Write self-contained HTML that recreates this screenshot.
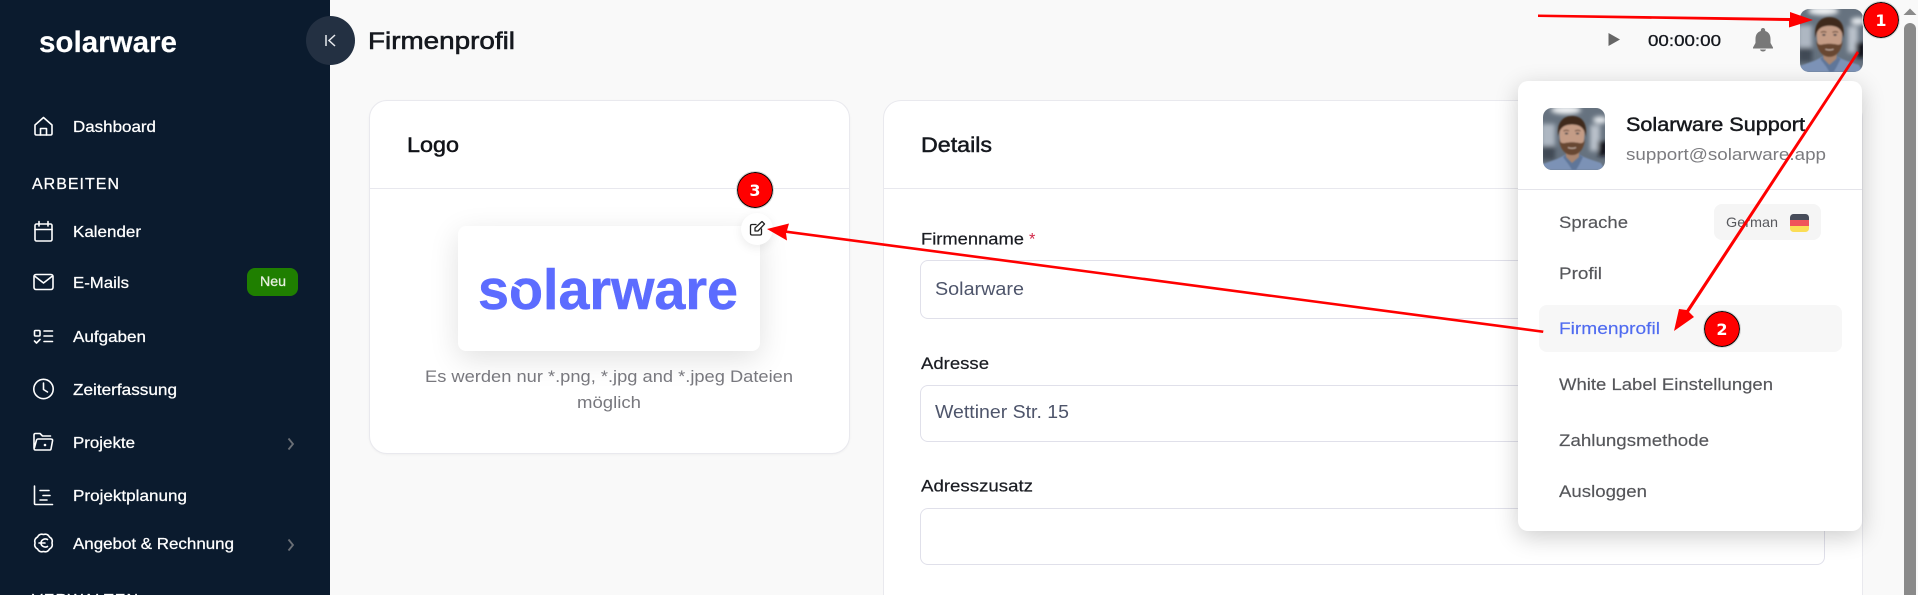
<!DOCTYPE html>
<html lang="de">
<head>
<meta charset="utf-8">
<title>Firmenprofil</title>
<style>
html,body{margin:0;padding:0;width:1918px;height:595px;overflow:hidden;background:#f9f9f9;font-family:"Liberation Sans",sans-serif}
#app{position:relative;width:1918px;height:595px;overflow:hidden;background:#f9f9f9}
.abs,svg.layer{position:absolute}
svg.layer{left:0;top:0}
.sidebar{left:0;top:0;width:330px;height:595px;background:#0b1b2e}
.collapse{left:306px;top:16px;width:49px;height:49px;border-radius:50%;background:#233042}
.card{background:#fff;border:1px solid #e9e9ee;border-radius:18px;box-sizing:border-box;box-shadow:0 1px 2px rgba(0,0,0,.04)}
.hr{height:1px;background:#e8e8ee}
.input{background:#fff;border:1px solid #e0e0ea;border-radius:8px;box-sizing:border-box}
.logobox{left:458px;top:226px;width:302px;height:125px;background:#fff;border-radius:8px;box-shadow:0 8px 30px rgba(0,0,0,.12)}
.editbtn{left:741px;top:213px;width:32px;height:32px;border-radius:50%;background:#fff;box-shadow:0 3px 10px rgba(0,0,0,.08)}
.menu{left:1518px;top:81px;width:344px;height:450px;background:#fff;border-radius:10px;box-shadow:0 6px 24px rgba(0,0,0,.2)}
.pill{left:1714px;top:204px;width:107px;height:36px;background:#f5f5f5;border-radius:8px}
.active{left:1539px;top:305px;width:303px;height:47px;background:#f7f7f7;border-radius:8px}
.thumb{left:1904px;top:23px;width:12px;height:572px;background:#8a8a8a;border-radius:6px 6px 0 0}
</style>
</head>
<body>
<div id="app">
<div class="abs sidebar"></div>
<div class="abs collapse"></div>

<div class="abs card" style="left:369px;top:100px;width:481px;height:354px"></div>
<div class="abs hr" style="left:370px;top:188px;width:479px"></div>
<div class="abs card" style="left:883px;top:100px;width:980px;height:495px;border-bottom:0;border-radius:18px 18px 0 0;box-shadow:none"></div>
<div class="abs hr" style="left:884px;top:188px;width:978px"></div>
<div class="abs logobox"></div>
<div class="abs editbtn"></div>
<div class="abs input" style="left:920px;top:260px;width:905px;height:59px"></div>
<div class="abs input" style="left:920px;top:385px;width:905px;height:57px"></div>
<div class="abs input" style="left:920px;top:508px;width:905px;height:57px"></div>

<div class="abs thumb"></div>

<div class="abs menu"></div>
<div class="abs hr" style="left:1518px;top:189px;width:344px;background:#e4e4ea"></div>
<div class="abs pill"></div>
<div class="abs active"></div>

<svg class="layer" width="1918" height="595" viewBox="0 0 1918 595" xmlns="http://www.w3.org/2000/svg" font-family="'Liberation Sans',sans-serif">
<defs>
  <filter id="b3" x="-30%" y="-30%" width="160%" height="160%"><feGaussianBlur stdDeviation="2.4"/></filter>
  <filter id="b0" x="-30%" y="-30%" width="160%" height="160%"><feGaussianBlur stdDeviation=".7"/></filter>
  <clipPath id="rr"><rect width="62" height="62" rx="9"/></clipPath>
  <g id="face" clip-path="url(#rr)">
    <rect width="62" height="62" fill="#66727f"/>
    <g filter="url(#b3)">
      <ellipse cx="23" cy="2" rx="15" ry="4" fill="#f2f4f6"/>
      <ellipse cx="57" cy="12" rx="7" ry="3.5" fill="#e8ecf0"/>
      <rect x="-2" y="16" width="14" height="24" fill="#aeb7c2"/>
      <rect x="47" y="17" width="10" height="26" fill="#b9c1ca"/>
      <rect x="-2" y="38" width="14" height="14" fill="#3f4955"/>
      <rect x="55" y="33" width="9" height="15" fill="#0c0f14"/>
    </g>
    <path d="M0 62V56L14 51 22 47H36L46 51 58 55 62 62Z" fill="#7b92b6" filter="url(#b0)"/>
    <path d="M20 49 26 57 29 62H33L36 57 40 49 36 46H23Z" fill="#5f7699" filter="url(#b0)"/>
    <path d="M23 38H36V49L29 55 23 49Z" fill="#a98570" filter="url(#b0)"/>
    <g filter="url(#b0)">
      <ellipse cx="29" cy="27" rx="12.500" ry="17.500" fill="#c49c86"/>
      <path d="M15.500 29C13 16 19 8 29 8 39 8 45 15 42.500 29 42 21 38 16.500 29 16.500 20 16.500 16 21 15.500 29Z" fill="#3f2a1f"/>
      <path d="M16 30C16.500 41 22 47 29 47 36 47 41.500 41 42 30 41 35 39 35.500 36 35 32 34 26 34 22 35 19 35.500 17 35 16 30Z" fill="#684733"/>
      <path d="M25 39.500C27 40.600 31 40.600 33 39.500" stroke="#dcc8bc" stroke-width=".9" fill="none"/>
      <ellipse cx="23.500" cy="25.500" rx="1.700" ry=".9" fill="#3e3c44"/>
      <ellipse cx="34.500" cy="25.500" rx="1.700" ry=".9" fill="#3e3c44"/>
      <path d="M20.500 23Q23.500 21.500 26 23M32 23Q35 21.500 37.500 23" stroke="#553a2a" stroke-width="1" fill="none"/>
    </g>
  </g>
</defs>

<!-- sidebar logo -->
<text x="39" y="52" font-size="30" font-weight="700" fill="#fff" stroke="#fff" stroke-width=".15" textLength="138" lengthAdjust="spacingAndGlyphs">solarware</text>

<!-- collapse icon -->
<path d="M326 35V46M335 35l-6 5.500 6 5.500" fill="none" stroke="#e8eaee" stroke-width="1.500"/>

<!-- page title -->
<text x="368" y="49" font-size="24.500" fill="#15181e" stroke="#15181e" stroke-width=".6" textLength="147" lengthAdjust="spacingAndGlyphs">Firmenprofil</text>

<!-- sidebar nav -->
<g fill="#fff" font-size="16" stroke="#fff" stroke-width=".25">
  <text x="73" y="132" textLength="83" lengthAdjust="spacingAndGlyphs">Dashboard</text>
  <text x="32" y="189" textLength="87" lengthAdjust="spacing">ARBEITEN</text>
  <text x="73" y="237" textLength="68" lengthAdjust="spacingAndGlyphs">Kalender</text>
  <text x="73" y="288" textLength="56" lengthAdjust="spacingAndGlyphs">E-Mails</text>
  <text x="73" y="342" textLength="73" lengthAdjust="spacingAndGlyphs">Aufgaben</text>
  <text x="73" y="395" textLength="104" lengthAdjust="spacingAndGlyphs">Zeiterfassung</text>
  <text x="73" y="448" textLength="62" lengthAdjust="spacingAndGlyphs">Projekte</text>
  <text x="73" y="501" textLength="114" lengthAdjust="spacingAndGlyphs">Projektplanung</text>
  <text x="73" y="549" textLength="161" lengthAdjust="spacingAndGlyphs">Angebot &amp; Rechnung</text>
  <text x="32" y="605" textLength="106" lengthAdjust="spacing">VERWALTEN</text>
</g>
<rect x="247" y="268" width="51" height="28" rx="8" fill="#1f7f00"/>
<text x="260" y="286" font-size="14" fill="#e6efdf" stroke="#e6efdf" stroke-width=".3" textLength="26" lengthAdjust="spacingAndGlyphs">Neu</text>

<!-- sidebar icons -->
<g fill="none" stroke="#fff" stroke-width="1.600" stroke-linejoin="round" stroke-linecap="round">
  <path d="M35 125 43.500 117.500 52 125V133.500Q52 135 50.500 135H36.500Q35 135 35 133.500Z"/>
  <path d="M40.500 135V128.500H46.500V135"/>
  <rect x="35" y="224" width="17" height="17" rx="1.500"/>
  <path d="M35 229.500H52M39 221.500V226M48 221.500V226"/>
  <rect x="34" y="274.500" width="19" height="15" rx="2"/>
  <path d="M34.500 276 43.500 283 52.500 276"/>
  <rect x="34.500" y="330.500" width="5.500" height="5.500" rx="1"/>
  <path d="M34.500 341 36.500 343 40 339.500M44 331H52.500M44 336H52.500M44 341.500H52.500"/>
  <circle cx="43.500" cy="389" r="9.700"/>
  <path d="M43.500 383V389.500L47.500 392"/>
  <path d="M34 448V435C34 434 34.500 433.500 35.500 433.500H40L42.500 436H50.500M34.500 447.500 36.500 440Q37 439 38 439H51Q53 439 52.500 441L51 449Q50.800 450 50 450H35.500Q34 450 34 448Z"/>
  <path d="M34.500 486V503.500Q34.500 504.500 35.500 504.500H52.500M40 490.500H49M43 495.500H50M40 500H47"/>
  <path d="M52 543Q53.200 547 49.500 549 47.500 552.700 43.500 551.500 39.500 552.700 37.500 549 33.800 547 35 543 33.800 539 37.500 537 39.500 533.300 43.500 534.500 47.500 533.300 49.500 537 53.200 539 52 543Z"/>
  <path d="M47.500 539.500C44.500 538 41 540 41 543S44.500 548 47.500 546.500M39 543H45"/>
</g>
<circle cx="45" cy="445" r="1.300" fill="#fff"/>
<path d="M288.500 438.500 293 444 288.500 449.500M288.500 539.500 293 545 288.500 550.500" fill="none" stroke="#6a6f76" stroke-width="1.800"/>

<!-- Logo card -->
<text x="407" y="152" font-size="21.500" fill="#111318" stroke="#111318" stroke-width=".5" textLength="52" lengthAdjust="spacingAndGlyphs">Logo</text>
<text x="478" y="309" font-size="57" font-weight="700" fill="#5c6cff" stroke="#5c6cff" stroke-width=".5" textLength="260" lengthAdjust="spacingAndGlyphs">solarware</text>
<path d="M507 284Q518 284 524 293" fill="none" stroke="#fff" stroke-width="2.500"/>
<text x="425" y="382" font-size="16.500" fill="#78787e" textLength="368" lengthAdjust="spacingAndGlyphs">Es werden nur *.png, *.jpg and *.jpeg Dateien</text>
<text x="577" y="408" font-size="16.500" fill="#78787e" textLength="64" lengthAdjust="spacingAndGlyphs">möglich</text>
<g fill="none" stroke="#222" stroke-width="1.300" stroke-linejoin="round" stroke-linecap="round">
  <path d="M756 224.500H752Q750.500 224.500 750.500 226V233.500Q750.500 235 752 235H760Q761.500 235 761.500 233.500V229"/>
  <path d="M755 231V228L762 221.500 764.500 224 758 231Z"/>
</g>

<!-- Details -->
<text x="921" y="152" font-size="21.500" fill="#15181e" stroke="#15181e" stroke-width=".5" textLength="71" lengthAdjust="spacingAndGlyphs">Details</text>
<text x="921" y="244.500" font-size="16.500" fill="#1a1c22" stroke="#1a1c22" stroke-width=".2" textLength="103" lengthAdjust="spacingAndGlyphs">Firmenname</text>
<text x="1029" y="244.500" font-size="16.500" fill="#d22a4a">*</text>
<text x="935" y="295" font-size="18" fill="#4e556b" textLength="89" lengthAdjust="spacingAndGlyphs">Solarware</text>
<text x="921" y="369" font-size="16.500" fill="#1a1c22" stroke="#1a1c22" stroke-width=".2" textLength="68" lengthAdjust="spacingAndGlyphs">Adresse</text>
<text x="935" y="418" font-size="18" fill="#4e556b" textLength="134" lengthAdjust="spacingAndGlyphs">Wettiner Str. 15</text>
<text x="921" y="491.500" font-size="16.500" fill="#1a1c22" stroke="#1a1c22" stroke-width=".2" textLength="112" lengthAdjust="spacingAndGlyphs">Adresszusatz</text>

<!-- top bar -->
<path d="M1608.500 33V46L1620 39.500Z" fill="#666"/>
<text x="1648" y="46" font-size="16" fill="#15181e" stroke="#15181e" stroke-width=".3" textLength="73" lengthAdjust="spacingAndGlyphs">00:00:00</text>
<path d="M1763 28a2.200 2.200 0 0 1 2.200 2.200v.8c3.600 1.100 5.300 4 5.300 8v4l2.500 4.500v1h-20v-1l2.500-4.500v-4c0-4 1.700-6.900 5.300-8v-.8a2.200 2.200 0 0 1 2.200-2.200z" fill="#787878"/>
<path d="M1760 49.500h6c-.3 1.400-1.500 2-3 2s-2.700-.6-3-2Z" fill="#787878"/>
<use href="#face" transform="translate(1800 9) scale(1.016)"/>

<!-- menu -->
<use href="#face" transform="translate(1543 108)"/>
<text x="1626" y="131" font-size="19" fill="#17191d" stroke="#17191d" stroke-width=".45" textLength="179" lengthAdjust="spacingAndGlyphs">Solarware Support</text>
<text x="1626" y="160" font-size="17" fill="#7b7b7f" textLength="200" lengthAdjust="spacingAndGlyphs">support@solarware.app</text>
<g font-size="17" fill="#55565a" stroke-width=".15">
  <text x="1559" y="228" stroke="#55565a" textLength="69" lengthAdjust="spacingAndGlyphs">Sprache</text>
  <text x="1559" y="279" stroke="#55565a" textLength="43" lengthAdjust="spacingAndGlyphs">Profil</text>
  <text x="1559" y="334" fill="#4f6bf0" stroke="#4f6bf0" textLength="101" lengthAdjust="spacingAndGlyphs">Firmenprofil</text>
  <text x="1559" y="390" stroke="#55565a" textLength="214" lengthAdjust="spacingAndGlyphs">White Label Einstellungen</text>
  <text x="1559" y="446" stroke="#55565a" textLength="150" lengthAdjust="spacingAndGlyphs">Zahlungsmethode</text>
  <text x="1559" y="497" stroke="#55565a" textLength="88" lengthAdjust="spacingAndGlyphs">Ausloggen</text>
</g>
<text x="1726" y="227" font-size="14" fill="#58595e" textLength="52" lengthAdjust="spacingAndGlyphs">German</text>
<clipPath id="fl"><rect x="1790" y="214" width="19" height="18" rx="3.500"/></clipPath>
<g clip-path="url(#fl)">
  <rect x="1790" y="214" width="19" height="6" fill="#474c5a"/>
  <rect x="1790" y="220" width="19" height="6" fill="#f0535a"/>
  <rect x="1790" y="226" width="19" height="6" fill="#fbdd55"/>
</g>

<!-- scrollbar arrow -->
<path d="M1903.500 15 1910 8.500 1916.500 15Z" fill="#8a8a8a"/>
</svg>

<!-- annotations -->
<svg class="layer" width="1918" height="595" viewBox="0 0 1918 595" xmlns="http://www.w3.org/2000/svg" font-family="'Liberation Sans',sans-serif">
  <g fill="#ff0000">
    <path d="M1538 14.500 1790 18V12L1813 20 1789 27.500V21L1538 17Z"/>
    <path d="M1857 51 1859 53 1689 312 1694 317 1674 331 1679 309 1686.500 310Z"/>
    <path d="M1543.500 330.500 1543 333 786 233 787 240.500 767 229 789 223.500 787 230.500Z"/>
  </g>
  <g stroke="#000" stroke-width="1" fill="#ff0000">
    <circle cx="1881" cy="20" r="17.500"/>
    <circle cx="1722" cy="329" r="17.500"/>
    <circle cx="755" cy="190" r="17.500"/>
  </g>
  <g fill="none" stroke="#d8d8d8" stroke-width="1.100">
    <circle cx="1881" cy="20" r="18.500"/>
    <circle cx="1722" cy="329" r="18.500"/>
    <circle cx="755" cy="190" r="18.500"/>
  </g>
  <g fill="#fff" font-size="16" font-weight="700" text-anchor="middle">
    <text x="1881" y="26" font-family="'DejaVu Sans',sans-serif">1</text>
    <text x="1722" y="335" font-family="'DejaVu Sans',sans-serif">2</text>
    <text x="755" y="196" font-family="'DejaVu Sans',sans-serif">3</text>
  </g>
</svg>
</div>
</body>
</html>
